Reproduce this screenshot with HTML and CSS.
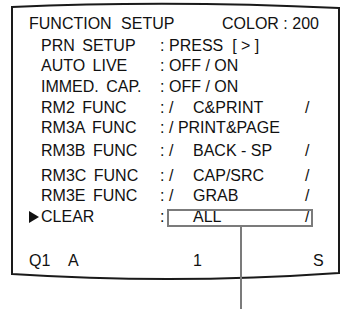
FILE: index.html
```html
<!DOCTYPE html>
<html>
<head>
<meta charset="utf-8">
<link rel="stylesheet" href="styles.css">
</head>
<body>
<div class="screen">
  <svg class="frame" width="346" height="309" viewBox="0 0 346 309">
    <path d="M12,7 Q170,0 339,8 L339,273 Q175,284.5 12,274 Z" fill="none" stroke="#1a1a1a" stroke-width="2"/>
  </svg>
  <div class="content">
    <div class="title">
      <span class="title-name">FUNCTION SETUP</span>
      <span class="title-color">COLOR : 200</span>
    </div>
    <div class="row r2"><span class="label">PRN SETUP</span><span class="colon">:</span><span class="value">PRESS&nbsp; [ &gt; ]</span></div>
    <div class="row r3"><span class="label">AUTO LIVE</span><span class="colon">:</span><span class="value">OFF / ON</span></div>
    <div class="row r4"><span class="label">IMMED. CAP.</span><span class="colon">:</span><span class="value">OFF / ON</span></div>
    <div class="row r5"><span class="label">RM2 FUNC</span><span class="colon">:</span><span class="value slots"><span class="sl">/</span><span class="item">C&amp;PRINT</span><span class="sl">/</span></span></div>
    <div class="row r6"><span class="label">RM3A FUNC</span><span class="colon">:</span><span class="value">/ PRINT&amp;PAGE</span></div>
    <div class="row r7"><span class="label">RM3B FUNC</span><span class="colon">:</span><span class="value slots"><span class="sl">/</span><span class="item">BACK - SP</span><span class="sl">/</span></span></div>
    <div class="row r8"><span class="label">RM3C FUNC</span><span class="colon">:</span><span class="value slots"><span class="sl">/</span><span class="item">CAP/SRC</span><span class="sl">/</span></span></div>
    <div class="row r9"><span class="label">RM3E FUNC</span><span class="colon">:</span><span class="value slots"><span class="sl">/</span><span class="item">GRAB</span><span class="sl">/</span></span></div>
    <div class="row r10 selected">
      <span class="label"><svg class="cursor" width="10" height="12" viewBox="0 0 10 12"><path d="M0,0 L10,6 L0,12 Z" fill="#111"/></svg>CLEAR</span><span class="colon">:</span><span class="value slots boxed"><span class="sl"></span><span class="item">ALL</span><span class="sl">/</span></span>
    </div>
    <div class="status">
      <span class="st-q">Q1</span><span class="st-a">A</span><span class="st-n">1</span><span class="st-s">S</span>
    </div>
  </div>
</div>
</body>
</html>
```
FILE: styles.css
```css
html, body {
  margin: 0;
  padding: 0;
  background: #ffffff;
}
.screen {
  position: relative;
  width: 346px;
  height: 309px;
  overflow: hidden;
  font-family: "Liberation Sans", Arial, sans-serif;
  font-size: 16px;
  color: #111111;
}
.frame {
  position: absolute;
  left: 0;
  top: 0;
}
.content {
  position: relative;
  padding-top: 14px;
}
.title {
  display: flex;
  height: 20px;
  line-height: 20px;
  padding-left: 29px;
}
.title-name {
  width: 193px;
  word-spacing: 5px;
  white-space: nowrap;
}
.row {
  display: flex;
  height: 20px;
  line-height: 20px;
  padding-left: 41px;
  white-space: nowrap;
}
.r2 { margin-top: 2px; }
.r4, .r5 { margin-top: 1px; }
.r7 { margin-top: 3px; }
.r8 { margin-top: 5px; }
.r10 { margin-top: 1px; }
.label {
  position: relative;
  width: 119px;
  word-spacing: 3px;
}
.colon {
  width: 9px;
}
.slots {
  display: flex;
}
.sl {
  width: 24px;
}
.item {
  width: 112px;
}
.cursor {
  position: absolute;
  left: -12px;
  top: 4px;
}
.boxed {
  position: relative;
}
.boxed::before {
  content: "";
  position: absolute;
  left: -2px;
  top: 2px;
  width: 142px;
  height: 14px;
  border: 2px solid #7b7b7b;
}
.boxed::after {
  content: "";
  position: absolute;
  left: 71px;
  top: 20px;
  width: 2px;
  height: 100px;
  background: #7b7b7b;
}
.status {
  display: flex;
  height: 20px;
  line-height: 20px;
  margin-top: 24px;
  padding-left: 29px;
}
.st-q { width: 39px; }
.st-a { width: 125px; }
.st-n { width: 120px; }
```
